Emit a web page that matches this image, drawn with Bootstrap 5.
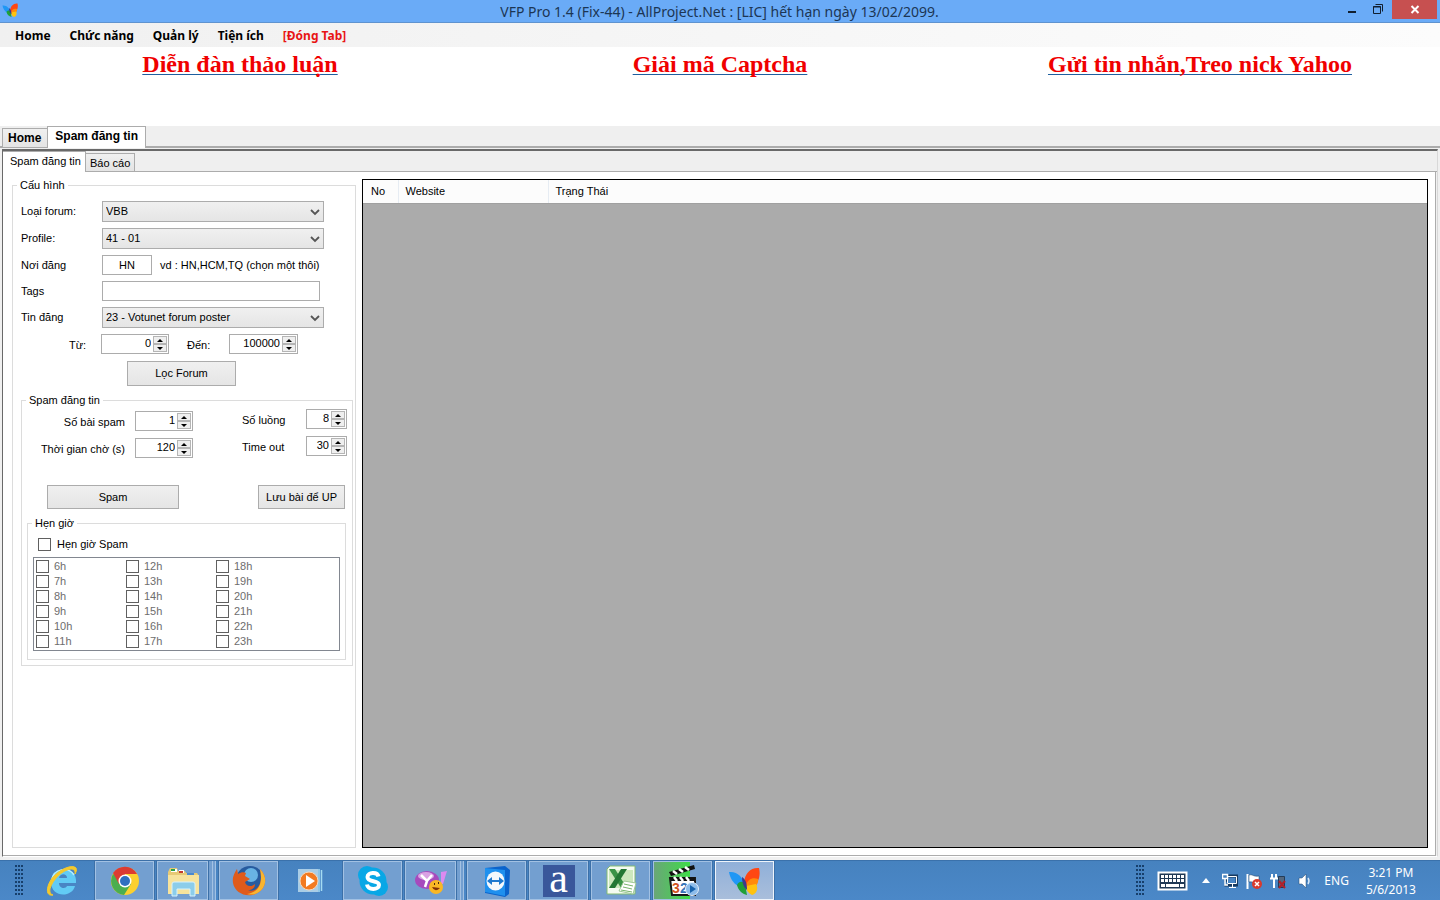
<!DOCTYPE html>
<html lang="vi">
<head>
<meta charset="utf-8">
<meta name="viewport" content="width=device-width, initial-scale=1">
<title>VFP Pro 1.4</title>
<link href="https://cdn.jsdelivr.net/npm/bootstrap@5.3.0/dist/css/bootstrap.min.css" rel="stylesheet">
<style>
:root { --ui: "Liberation Sans", Arial, sans-serif; --humanist: "Noto Sans", "Open Sans", sans-serif; --edge: #acacac; }
body { font-family: var(--ui); font-size: 11px; line-height: 13px; color: #000; background: #f0f0f0; }

/* window frame */
.titlebar { height: 23px; background: #6aabf7; border-bottom: 1px solid #5f93cf; padding-left: 2px; padding-right: 3px; }
.titlebar h1 { font-family: var(--humanist); font-weight: 400; font-size: 14px; line-height: 23px; color: #1c3654; padding-left: 80px; }
.titlebar button { border: 0; padding: 0; background: none; height: 19px; width: 26px; }
.titlebar .close-win { width: 45px; background: #c75050; }
.menubar { height: 24px; padding-left: 5px; background: linear-gradient(90deg, #f0f0f0, #fcfcfc); }
.menubar .nav-link { font: bold 12px/25px var(--humanist); color: #000; padding: 0 9px 0 10px; }
.menubar .nav-link.closer { color: #e81414; }
.promo { height: 79px; background: #fff; padding-top: 3px; }
.promo a { font: bold 24px/28px "Liberation Serif", serif; color: #f00000; text-decoration-line: underline; text-decoration-color: #1f5f9f; text-decoration-thickness: 1px; text-decoration-skip-ink: none; text-underline-offset: 2px; }

/* tabs */
.tabstrip { background: #efefef; border: 0; align-items: flex-end; }
.tabstrip .nav-link { border: 1px solid var(--edge); border-bottom: 0; border-radius: 0; margin: 0; color: #000; background: linear-gradient(#f0f0f0, #e4e4e4); }
.tabstrip .nav-link.active { background: #fff; color: #000; border-color: var(--edge); }
.outer-tabs { height: 22px; padding-left: 2px; box-shadow: inset 0 -2px #acacac; }
.outer-tabs .nav-link { font: bold 12px/18px var(--ui); height: 19px; padding: 0 6px 0 5px; margin-bottom: 1px; border-right: 0; }
.outer-tabs .nav-link.active { height: 22px; padding: 0 7px; margin: 0; border-right: 1px solid var(--edge); }
.inner-tabs { height: 21px; border-bottom: 1px solid var(--edge); }
.inner-tabs .nav-link { height: 18px; line-height: 18px; padding: 0 4px; border-left: 0; }
.inner-tabs .nav-link.active { height: 21px; padding: 0 4px 0 7px; margin-bottom: -1px; }
.outer-page { margin: 1px 2px 3px; border: 1px solid #d8d8d8; border-left-color: #696969; border-top: 2px solid #696969; border-bottom-color: #fff; min-height: 0; }
.inner-page { background: #fff; border-right: 1px solid var(--edge); border-bottom: 1px solid var(--edge); padding: 7px 7px 7px 9px; margin-right: 1px; gap: 6px; min-height: 0; }

/* group boxes */
.group { border: 1px solid #dcdcdc; margin: 0; padding: 0; }
.group > legend { float: none; width: auto; font-size: 11px; line-height: 13px; margin: 0 0 0 4px; padding: 0 3px; }
.settings { width: 344px; flex: none; }
.fields { padding: 9px 31px 0 8px; display: grid; grid-template-columns: 81px 1fr; row-gap: 6px; align-items: center; }
.spam-group { margin: 8px 2px 0 8px; }
.timer-group { margin: 8px 1px 0 5px; }

/* controls */
.ctl { font-size: 11px; line-height: 13px; color: #000; border: 1px solid var(--edge); border-radius: 0; background-color: #fff; padding: 0 4px; height: 20px; min-height: 0; }
.ctl-place { width: 50px; text-align: center; }
.ctl-drop { height: 21px; padding: 0 18px 0 3px; background: url("data:image/svg+xml,%3Csvg xmlns='http://www.w3.org/2000/svg' viewBox='0 0 10 8'%3E%3Cpath d='M1 2l4 4 4-4' fill='none' stroke='%23555' stroke-width='1.800'/%3E%3C/svg%3E") right 3px center / 10px 8px no-repeat, linear-gradient(#f0f0f0, #e5e5e5); }
.push { border: 1px solid var(--edge); border-radius: 0; font-size: 11px; line-height: 13px; color: #000; background: linear-gradient(#f0f0f0, #e5e5e5); padding: 0; height: 24px; }
.push-filter { width: 109px; height: 25px; margin: 7px auto 0 114px; }
.push-spam { width: 132px; }
.push-save { width: 87px; }
.spin { border: 1px solid var(--edge); height: 20px; background: #fff; padding: 1px; }
.spin input { border: 0; padding: 0 2px 2px 0; width: 0; flex: 1; text-align: right; font-size: 11px; line-height: 13px; background: none; color: #000; }
.spin .steps { width: 14px; display: flex; flex-direction: column; }
.spin .steps button { flex: 1; min-height: 0; padding: 0; border: 1px solid #b5b5b5; background: #efefef; display: flex; align-items: center; justify-content: center; }
.range { display: grid; grid-template-columns: 32px 68px 18px 42px 69px; margin-top: 6px; padding-left: 56px; align-items: center; }
.range label { line-height: 22px; height: 20px; }
.job { padding: 2px 5px 5px 0; }
.job-left { display: grid; grid-template-columns: 103px 58px; column-gap: 10px; row-gap: 7px; padding-top: 2px; }
.job-right { display: grid; grid-template-columns: 64px 41px; row-gap: 7px; }
.job-left label, .job-right label { line-height: 22px; height: 20px; }
.job-actions { padding: 27px 2px 0 25px; }
.tick { width: 13px; height: 13px; margin: 0; border: 1px solid #606060; border-radius: 0 !important; background-color: #fff; flex: none; float: none; opacity: 1 !important; }
.timer-row { padding: 8px 0 6px 10px; gap: 6px; }
.hours { border: 1px solid #828790; margin: 0 5px 8px; padding: 1px 2px; display: grid; grid-template-rows: repeat(6, 15px); grid-auto-flow: column; grid-auto-columns: 90px; }
.hours label { color: #6d6d6d; display: flex; align-items: center; gap: 5px; }

/* results */
.results { border: 1px solid #000; background: #ababab; min-width: 0; }
.results table { table-layout: fixed; width: 100%; }
.results th { font-weight: normal; background: #fcfcfc; height: 23px; padding: 0 7px; border-right: 1px solid #e6ecf3; border-bottom: 1px solid #a0a0a0; }
.results th:first-child { padding-left: 8px; }
.results th:last-child { border-right: 0; }
.col-no { width: 35px; }
.col-site { width: 150px; }

/* taskbar */
.taskbar { height: 40px; background: linear-gradient(#4682bf, #4b88c8); border-top: 1px solid #3a71ab; font-family: var(--humanist); padding-left: 15px; }
.grip { width: 9px; height: 31px; background: radial-gradient(circle at 1px 1px, #173f6b 1px, transparent 1px) 0 0 / 3px 4px; flex: none; }
.tasks { display: flex; gap: 3px; margin-left: 9px; }
.task { width: 59px; height: 39px; padding: 0; border: 1px solid transparent; background: none; display: flex; align-items: center; justify-content: center; }
.task.open { background: #739fd0; border-color: #a2c1e3; outline: 1px solid #3c70a8; }
.task.stack { width: 51px; margin-right: 8px; box-shadow: 4px 0 #739fd0, 5px 0 #a2c1e3, 7px 0 #739fd0, 8px 0 #a2c1e3; }
.task.busy { background: linear-gradient(90deg, #6aa678, #3fdc48 63%, #739fd0 63%); }
.task.current { background: linear-gradient(#90b0d9, #a9bedb); border-color: #eef4fb; }
.task svg { width: 34px; height: 34px; }
.letter { width: 32px; height: 32px; background: #39579b; color: #fff; font: 42px/26px "Liberation Serif", serif; }
.tray { color: #fff; font-size: 12px; line-height: 17px; padding-right: 24px; }
.tray button { border: 0; padding: 0; background: none; color: #fff; display: flex; align-items: center; }
.tray-icons { gap: 8px; margin-left: 10px; }
.lang { margin-left: 12px; }
.clock { margin-left: 17px; text-align: center; }
</style>
</head>
<body class="vh-100 d-flex flex-column overflow-hidden">

<svg width="0" height="0" class="position-absolute" aria-hidden="true">
  <symbol id="butterfly" viewBox="0 0 34 34">
    <path d="M1 8c8-1 14 5 16 13-1 3-4 3-7 1C5 19 2 14 1 8z" fill="#1f97f5"/>
    <path d="M9 21c2-4 6-4 8-1l2 11c-5-1-9-5-10-10z" fill="#1fa038"/>
    <path d="M16 18C17 9 23 3 31 4c2 8-1 14-4 17l-9 1z" fill="#ff4713"/>
    <path d="M18 22c1-7 7-9 12-7 1 6-4 10-11 10z" fill="#ff8a0a"/>
    <path d="M18 22l10-2c3 5 0 10-4 11-4-2-6-5-6-9z" fill="#ffc20e"/>
    <path d="M14 13c3 2 5 5 5 13-3-2-5-7-5-13z" fill="#3d3a8c"/>
  </symbol>
</svg>

<header class="titlebar d-flex align-items-start">
  <svg width="17" height="20" viewBox="0 0 34 34" aria-hidden="true"><use href="#butterfly"/></svg>
  <h1 class="flex-grow-1 text-center m-0">VFP Pro 1.4 (Fix-44) - AllProject.Net : [LIC] hết hạn ngày 13/02/2099.</h1>
  <button type="button" aria-label="Minimize"><svg width="26" height="19"><path d="M8 12h8" stroke="#111f30" stroke-width="2"/></svg></button>
  <button type="button" aria-label="Restore"><svg width="26" height="19" fill="none" stroke="#111f30"><path d="M7.500 6.500h7v7h-7zM7 7h8M9.500 4.500h7v7"/></svg></button>
  <button type="button" class="close-win" aria-label="Close"><svg width="45" height="19"><path d="M19.500 6l7 7m0-7l-7 7" stroke="#fff" stroke-width="2"/></svg></button>
</header>

<nav class="menubar nav">
  <a class="nav-link" href="#">Home</a>
  <a class="nav-link" href="#">Chức năng</a>
  <a class="nav-link" href="#">Quản lý</a>
  <a class="nav-link" href="#">Tiện ích</a>
  <a class="nav-link closer" href="#">[Đóng Tab]</a>
</nav>

<div class="promo row g-0 text-center">
  <div class="col-4"><a href="#">Diễn đàn thảo luận</a></div>
  <div class="col-4"><a href="#">Giải mã Captcha</a></div>
  <div class="col-4"><a href="#">Gửi tin nhắn,Treo nick Yahoo</a></div>
</div>

<nav class="nav nav-tabs tabstrip outer-tabs">
  <a class="nav-link" href="#">Home</a>
  <a class="nav-link active" href="#">Spam đăng tin</a>
</nav>

<main class="outer-page flex-grow-1 d-flex flex-column">
  <nav class="nav nav-tabs tabstrip inner-tabs">
    <a class="nav-link active" href="#">Spam đăng tin</a>
    <a class="nav-link" href="#">Báo cáo</a>
  </nav>
  <div class="inner-page flex-grow-1 d-flex">
    <fieldset class="group settings">
      <legend>Cấu hình</legend>
      <div class="fields">
        <label for="kind">Loại forum:</label>
        <select id="kind" class="form-select ctl ctl-drop"><option>VBB</option></select>
        <label for="profile">Profile:</label>
        <select id="profile" class="form-select ctl ctl-drop"><option>41 - 01</option></select>
        <label for="place">Nơi đăng</label>
        <div class="d-flex align-items-center gap-2">
          <input id="place" class="ctl ctl-place" value="HN"><span>vd : HN,HCM,TQ (chọn một thôi)</span>
        </div>
        <label for="tags">Tags</label>
        <div class="pe-1"><input id="tags" class="ctl d-block w-100"></div>
        <label for="post">Tin đăng</label>
        <select id="post" class="form-select ctl ctl-drop"><option>23 - Votunet forum poster</option></select>
      </div>
      <div class="range">
        <label for="from">Từ:</label>
        <div class="spin d-flex"><input id="from" value="0"><span class="steps"></span></div>
        <span></span>
        <label for="to">Đến:</label>
        <div class="spin d-flex"><input id="to" value="100000"><span class="steps"></span></div>
      </div>
      <button type="button" class="btn push push-filter d-block">Lọc Forum</button>

      <fieldset class="group spam-group">
        <legend>Spam đăng tin</legend>
        <div class="job">
          <div class="d-flex justify-content-between">
            <div class="job-left">
              <label for="count" class="text-end">Số bài spam</label>
              <div class="spin d-flex"><input id="count" value="1"><span class="steps"></span></div>
              <label for="wait" class="text-end">Thời gian chờ (s)</label>
              <div class="spin d-flex"><input id="wait" value="120"><span class="steps"></span></div>
            </div>
            <div class="job-right align-content-start">
              <label for="threads">Số luồng</label>
              <div class="spin d-flex"><input id="threads" value="8"><span class="steps"></span></div>
              <label for="timeout">Time out</label>
              <div class="spin d-flex"><input id="timeout" value="30"><span class="steps"></span></div>
            </div>
          </div>
          <div class="job-actions d-flex justify-content-between">
            <button type="button" class="btn push push-spam">Spam</button>
            <button type="button" class="btn push push-save">Lưu bài để UP</button>
          </div>
          <fieldset class="group timer-group">
            <legend>Hẹn giờ</legend>
            <div class="timer-row d-flex align-items-center">
              <input type="checkbox" class="form-check-input tick" id="timer"><label for="timer">Hẹn giờ Spam</label>
            </div>
            <div class="hours" id="hours"></div>
          </fieldset>
        </div>
      </fieldset>
    </fieldset>

    <section class="results flex-grow-1">
      <table>
        <colgroup><col class="col-no"><col class="col-site"><col></colgroup>
        <thead><tr><th>No</th><th>Website</th><th>Trạng Thái</th></tr></thead>
      </table>
    </section>
  </div>
</main>

<footer class="taskbar d-flex align-items-center">
  <span class="grip"></span>
  <div class="tasks">
    <button type="button" class="task" aria-label="Internet Explorer"><svg viewBox="0 0 34 34">
      <path d="M29 22h-8c-1 3-8 3-8-3h17C32 1 5 1 5 18c0 16 21 16 24 4zM13 14c1-5 8-5 8 0z" fill="#62cbf5" fill-rule="evenodd"/><path d="M6 15C8 5 22 2 28 11" fill="none" stroke="#b5edff" stroke-width="1.500"/>
      <path d="M7 31C-2 33 1 19 8 12S26 0 30 4c1 2 0 4-1 6 1-9-11-4-17 2S0 29 7 31z" fill="#f5c92d" stroke="#f5c92d"/></svg></button>
    <button type="button" class="task open" aria-label="Chrome"><svg viewBox="0 0 34 34">
      <circle cx="17" cy="17" r="14" fill="#fcd02f"/><path d="M17 17L5 10a14 14 0 0 0 11 21l7-11z" fill="#4bae4f"/><path d="M17 17v-7h12A14 14 0 0 0 5 9l6 11z" fill="#dc3b32"/>
      <circle cx="17" cy="17" r="6.500" fill="#fff"/><circle cx="17" cy="17" r="5" fill="#2f6fc0"/></svg></button>
    <button type="button" class="task open stack" aria-label="File Explorer"><svg viewBox="0 0 34 34">
      <path d="M2 8l2-4h7l1 3h7l1 2h11l2 3v18H2z" fill="#e7ca75"/><path d="M5 5h6v3H5z" fill="#fff"/><path d="M5 5h4v2H5z" fill="#28a148"/><path d="M13 6h5v3h-5z" fill="#fff"/><path d="M13 7h4v2h-4z" fill="#c53a2e"/><path d="M21 9h7v2h-7z" fill="#4a88d0"/>
      <path d="M2 11h31v19H2z" fill="#f7e39c"/><path d="M6 32V20q0-2 2-2h19q2 0 2 2v12h-5v-7H11v7z" fill="#8ccdea" stroke="#d6f2fd"/></svg></button>
    <button type="button" class="task open" aria-label="Firefox"><svg viewBox="0 0 34 34">
      <circle cx="18" cy="16" r="14" fill="#275b9f"/><circle cx="19" cy="11" r="7" fill="#68b3e4"/>
      <path d="M28 5c8 8 6 18-1 23-10 7-24 2-26-9C0 13 3 8 5 5l1 5c3-2 6-2 8-1l-1 3 5 3-5 3c1 5 7 5 10 2 0 4-3 6-7 6 7 3 16-4 12-21z" fill="#df5b1b"/><path d="M28 5c8 8 6 18-1 23-4 3-8 3-12 2 12-2 16-10 13-25z" fill="#f8b530"/></svg></button>
    <button type="button" class="task" aria-label="Media Player"><svg viewBox="0 0 34 34">
      <path d="M4 5h20v23H4z" fill="#a9cde6"/><path d="M25 5v23M27.500 6v21" stroke="#a5dbf2" stroke-width="1.500"/><circle cx="15" cy="17" r="9" fill="#f27b22" stroke="#f9d7b8"/><path d="M12 11l9 6-9 6z" fill="#fff"/></svg></button>
    <button type="button" class="task open" aria-label="Skype"><svg viewBox="0 0 34 34">
      <circle cx="11" cy="11" r="9" fill="#08a7e6"/><circle cx="23" cy="23" r="9" fill="#08a7e6"/><circle cx="17" cy="17" r="13.500" fill="#08a7e6"/>
      <path d="M22.500 12.500c-1-5-11-4.500-11 .5 0 6 11.500 2.500 11.500 8 0 5-11 5.500-12-.5" fill="none" stroke="#fff" stroke-width="4"/></svg></button>
    <button type="button" class="task open stack" aria-label="Yahoo Messenger"><svg viewBox="0 0 34 34">
      <ellipse cx="13" cy="16" rx="12" ry="9" fill="#a64bbd"/><ellipse cx="12" cy="12" rx="8" ry="4" fill="#d9a2e3"/><path d="M7 11l6 6 5-6m-5 6l-2 6" fill="none" stroke="#fff" stroke-width="2.500"/>
      <path d="M27 8l6-1-4 13h-2z" fill="#dc8af0"/><circle cx="22" cy="23" r="7" fill="#f9b725"/><path d="M18 23q3 6 8 1z" fill="#813108"/><path d="M20 20h1m3-1h1" stroke="#49270a" stroke-width="2"/></svg></button>
    <button type="button" class="task open" aria-label="TeamViewer"><svg viewBox="0 0 34 34">
      <path d="M5 4l20-2 5 4-1 24-4 3-20-4z" fill="#0b63cb"/><path d="M5 4l20 2v26L5 28z" fill="#1f90ee"/><ellipse cx="15.500" cy="17" rx="9" ry="9.500" fill="#f4f8fc"/><path d="M7 17l5-4v3h7v-3l5 4-5 4v-3h-7v3z" fill="#1d78cf"/></svg></button>
    <button type="button" class="task open" aria-label="Dictionary"><span class="letter">a</span></button>
    <button type="button" class="task open" aria-label="Excel"><svg viewBox="0 0 34 34">
      <path d="M6 2h25v28H3V5z" fill="#f4fbf1" stroke="#84bb73"/><path d="M5 6h24v18H5z" fill="#cce8bd"/><path d="M5 5h6l12 19h-6z" fill="#3a9345"/><path d="M17 5h6L11 24H5z" fill="#237733"/>
      <path d="M20 17l12 2-3 11-14-3z" fill="#fff" stroke="#9fc996"/><path d="M20 20l9 2m-10 1l9 2m-11 1l11 2" stroke="#78b36b"/></svg></button>
    <button type="button" class="task open busy" aria-label="Media Player Classic"><svg viewBox="0 0 34 34">
      <path d="M4 14h25v17H6z" fill="#fff" stroke="#171717" stroke-width="2"/><path d="M3 8L28 1l1 4L5 12z" fill="#111"/><path d="M7 7l4 3m2-5l4 3m2-5l4 3" stroke="#fff" stroke-width="2.500"/><path d="M4 13h25v4H5z" fill="#111"/><path d="M8 13l3 4m3-4l3 4m3-4l3 4" stroke="#fff" stroke-width="2.500"/>
      <text x="6" y="29" font-family="Liberation Sans, sans-serif" font-weight="bold" font-size="14" fill="#d3541f">3</text><text x="14" y="29" font-family="Liberation Sans, sans-serif" font-weight="bold" font-size="14" fill="#3675ba">2</text>
      <circle cx="26" cy="25" r="6.500" fill="#8dbcea" stroke="#e2effb"/><path d="M24 21l6 4-6 4z" fill="#1763ad"/></svg></button>
    <button type="button" class="task open current" aria-label="VFP Pro"><svg><use href="#butterfly"/></svg></button>
  </div>

  <div class="tray d-flex align-items-center ms-auto">
    <span class="grip"></span>
    <button type="button" class="ms-2 ps-1" aria-label="Touch keyboard"><svg width="31" height="20"><path d="M1.500 1.500h28v17h-28z" fill="#1f3854" stroke="#fff" stroke-width="2"/><path d="M4 5.500h23M4 9.500h23" stroke="#fff" stroke-width="3" stroke-dasharray="3 1"/><path d="M4 14.500h4m1 0h13m1 0h4" stroke="#fff" stroke-width="3"/></svg></button>
    <div class="tray-icons d-flex align-items-center">
      <button type="button" class="ms-1 me-1" aria-label="Show hidden icons"><svg width="8" height="5"><path d="M0 5l4-5 4 5z" fill="#fff"/></svg></button>
      <button type="button" aria-label="Network"><svg width="16" height="16" fill="none" stroke="#17395f"><path d="M4 3h11v9H4z" stroke-width="3"/><path d="M5.500 3.500h9v7h-9zM7 14.500h7M10.500 11v3" stroke="#fff"/><path d="M.5 1.500h5v4h-5zM3 6v6h3" fill="#4682bf" stroke="#fff" stroke-width="1.500"/></svg></button>
      <button type="button" aria-label="Action center"><svg width="16" height="16"><path d="M1.500 1v15" stroke="#fff" stroke-width="2"/><path d="M3 2c4-1 4 2 10 1v7c-5 1-6-2-10-1z" fill="#fff" stroke="#17395f" stroke-width=".5"/><circle cx="11" cy="11" r="5" fill="#d93a2d"/><path d="M9 9l4 4m0-4l-4 4" stroke="#fff" stroke-width="1.500"/></svg></button>
      <button type="button" aria-label="Power"><svg width="16" height="16"><path d="M2 1v4m4-4v4M0 5.500h8M4 6v9" stroke="#fff" stroke-width="2"/><path d="M8.500 3.500h6v11h-6z" fill="#54677e" stroke="#243c58"/><path d="M9 8l6 7m0-7l-6 7" stroke="#b2202a" stroke-width="2"/></svg></button>
      <button type="button" class="ms-1" aria-label="Volume"><svg width="14" height="16"><path d="M1 5h3l4-4v14l-4-4H1z" fill="#fff" stroke="#24486f" stroke-width=".5"/><path d="M10 5q2 3 0 6" fill="none" stroke="#d7e8f8" stroke-width="1.500"/></svg></button>
    </div>
    <span class="lang">ENG</span>
    <div class="clock"><div>3:21 PM</div><div>5/6/2013</div></div>
  </div>
</footer>

<script src="https://cdn.jsdelivr.net/npm/bootstrap@5.3.0/dist/js/bootstrap.bundle.min.js"></script>
<script>
document.querySelectorAll('.steps').forEach(s => {
  s.innerHTML = '<button type="button" aria-label="Up"><svg width="6" height="3"><path d="M0 3l3-3 3 3z"/></svg></button>' +
                '<button type="button" aria-label="Down"><svg width="6" height="3"><path d="M0 0l3 3 3-3z"/></svg></button>';
});
for (let h = 6; h < 24; h++) {
  document.getElementById('hours').insertAdjacentHTML('beforeend',
    `<label><input type="checkbox" class="form-check-input tick" disabled>${h}h</label>`);
}
</script>
</body>
</html>
